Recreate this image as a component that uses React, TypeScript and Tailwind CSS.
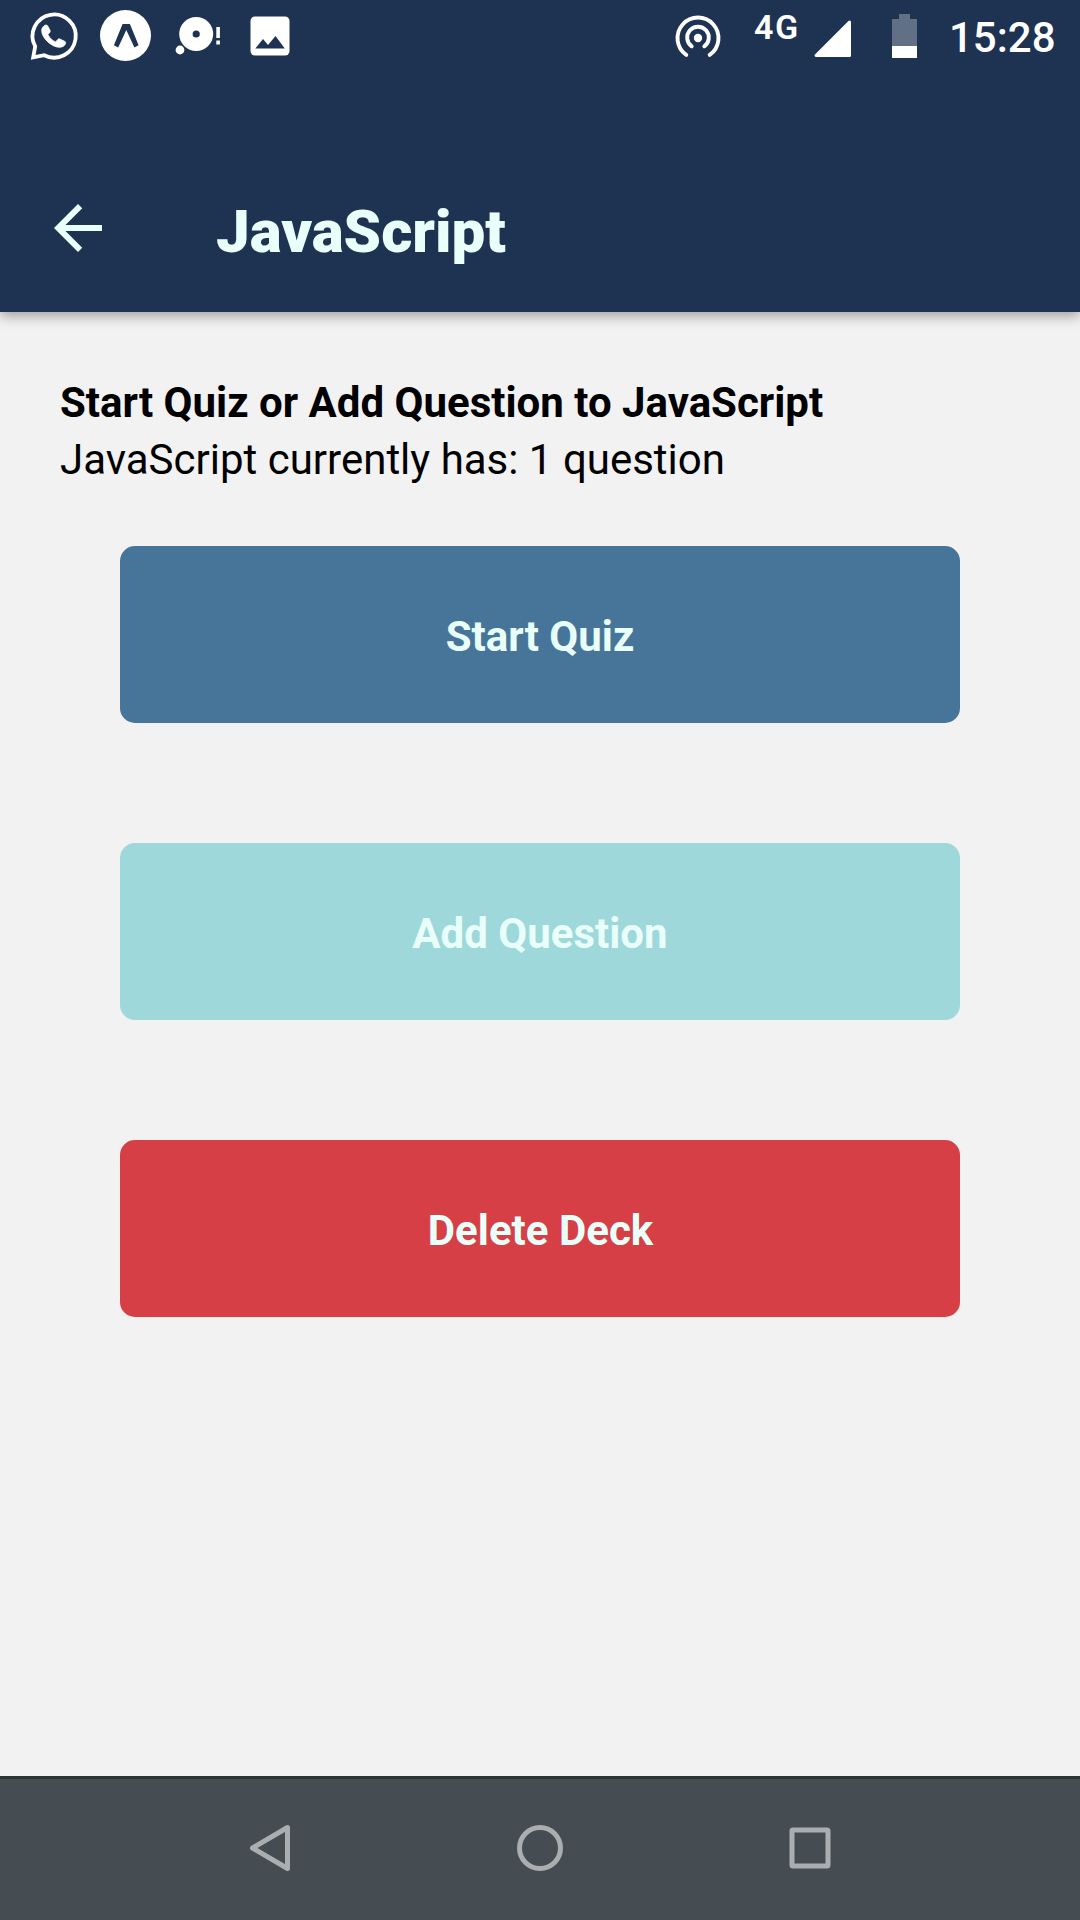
import type { ReactNode } from "react";

function StatusBar() {
  return (
    <div className="flex h-[72px] items-start text-white">
      <svg className="h-[72px] w-[320px] shrink-0" viewBox="0 0 320 72" fill="none">
        <path d="M33.2 57.3 L35.2 46.4 A21.6 21.6 0 1 1 44.2 55.2 Z" stroke="white" strokeWidth="3.8" strokeLinejoin="miter" />
        <path
          d="M43.900 26c1.200-1.200 3-1.300 3.800-.1l2.200 4.200c.6 1.100.2 2-.5 2.800l-1.500 1.600c1.700 3.600 4.300 6 7.700 7.400l2.200-2.400c.6-.7 1.300-.8 2.100-.4l4.700 2.200c.9.4 1.200 1 1 2-.5 2.400-3.200 4-5.900 4-7.600 0-18-8.800-18-16.900 0-1.800.9-3.200 2.200-4.400z"
          fill="white"
          stroke="white"
          strokeWidth="0.8"
        />
        <circle cx="125.500" cy="35.500" r="25.500" fill="white" />
        <path d="M122.600 24h7.300l8.700 21.300-4.200 2.200-8.100-17.500-8.100 17.500-4.300-2.200z" fill="#1e3252" />
        <circle cx="196.200" cy="34" r="17" fill="white" />
        <circle cx="196.200" cy="34" r="3.600" fill="#1e3252" />
        <circle cx="180" cy="50" r="4.400" fill="white" />
        <path d="M216.300 27h3.600v11h-3.600zM216.300 40.600h3.600v3.800h-3.600z" fill="white" />
        <rect x="250.500" y="16.500" width="39" height="39" rx="4.500" fill="white" />
        <path d="M255.300 48.600l7.700-9.600 5 6 7.500-9 9.300 12.600z" fill="#1e3252" />
      </svg>
      <svg className="ml-[350px] h-[72px] w-[60px] shrink-0" viewBox="670 0 60 72" fill="none" stroke="white" strokeLinecap="round">
        <circle cx="698" cy="38" r="4.200" fill="white" stroke="none" />
        <path d="M691.700 46.300a10.800 10.800 0 1 1 12.600 0" strokeWidth="3.900" />
        <path d="M686.300 54.900a20.500 20.500 0 1 1 23.400 0" strokeWidth="3.900" />
      </svg>
      <span className="ml-[24px] mt-[7px] w-[50px] text-[34px] leading-[40px] font-semibold tracking-[1.5px]">4G</span>
      <svg className="ml-[6px] h-[72px] w-[110px] shrink-0" viewBox="810 0 110 72">
        <path d="M816 55.500H849.500V22z" fill="white" stroke="white" strokeWidth="3" strokeLinejoin="round" />
        <path d="M892 19h7v-5h11v5h7v27h-25z" fill="#627086" />
        <path d="M892 46h25v12h-25z" fill="white" />
      </svg>
      <span className="ml-[29px] mt-[13px] text-[42px] leading-[50px] font-medium">15:28</span>
    </div>
  );
}

function Header({ title }: { title: string }) {
  return (
    <header className="z-10 h-[312px] shrink-0 bg-[#1e3252] shadow-[0_4px_12px_rgba(0,0,0,0.35)]">
      <StatusBar />
      <div className="mt-[72px] flex h-[168px] items-center pl-[42px] text-[#e8fffa]">
        <button aria-label="Back">
          <svg className="size-[72px]" viewBox="0 0 24 24" fill="currentColor">
            <path d="M20 11H7.830l5.590-5.590L12 4l-8 8 8 8 1.410-1.410L7.830 13H20v-2z" />
          </svg>
        </button>
        <h1 className="mt-[8px] ml-[102px] text-[60px] leading-[70px] font-black">{title}</h1>
      </div>
    </header>
  );
}

function ActionButton({ color, children }: { color: string; children: ReactNode }) {
  return (
    <button className={`h-[177px] w-[840px] rounded-[15px] pt-[3px] text-[42px] font-bold text-[#e8fffa] ${color}`}>
      {children}
    </button>
  );
}

function NavBar() {
  return (
    <nav className="flex h-[144px] shrink-0 items-start justify-center gap-[198px] border-t-[3px] border-[#2c3335] bg-[#454d52] pt-[33px]">
      <svg className="size-[72px]" viewBox="0 0 72 72" fill="none" stroke="#abaeb0" strokeWidth="5" strokeLinejoin="round">
        <path d="M18.500 36L53.500 15.500V56.500Z" />
      </svg>
      <svg className="size-[72px]" viewBox="0 0 72 72" fill="none" stroke="#abaeb0" strokeWidth="5">
        <circle cx="36" cy="36" r="20.500" />
      </svg>
      <svg className="size-[72px]" viewBox="0 0 72 72" fill="none" stroke="#abaeb0" strokeWidth="5">
        <rect x="18" y="18" width="36" height="36" rx="1" />
      </svg>
    </nav>
  );
}

export default function App() {
  return (
    <div className="flex h-[1920px] w-[1080px] flex-col bg-[#f2f2f2] font-['Roboto',sans-serif]">
      <Header title="JavaScript" />
      <main className="flex flex-1 flex-col px-[60px] pt-[60px] text-[42px] leading-[57px] text-black">
        <h2 className="mt-[2px] font-bold">Start Quiz or Add Question to JavaScript</h2>
        <p>JavaScript currently has: 1 question</p>
        <div className="mt-[58px] flex flex-col items-center gap-[120px]">
          <ActionButton color="bg-[#477599]">Start Quiz</ActionButton>
          <ActionButton color="bg-[#9ed8da]">Add Question</ActionButton>
          <ActionButton color="bg-[#d63f45] pl-px">Delete Deck</ActionButton>
        </div>
      </main>
      <NavBar />
    </div>
  );
}
